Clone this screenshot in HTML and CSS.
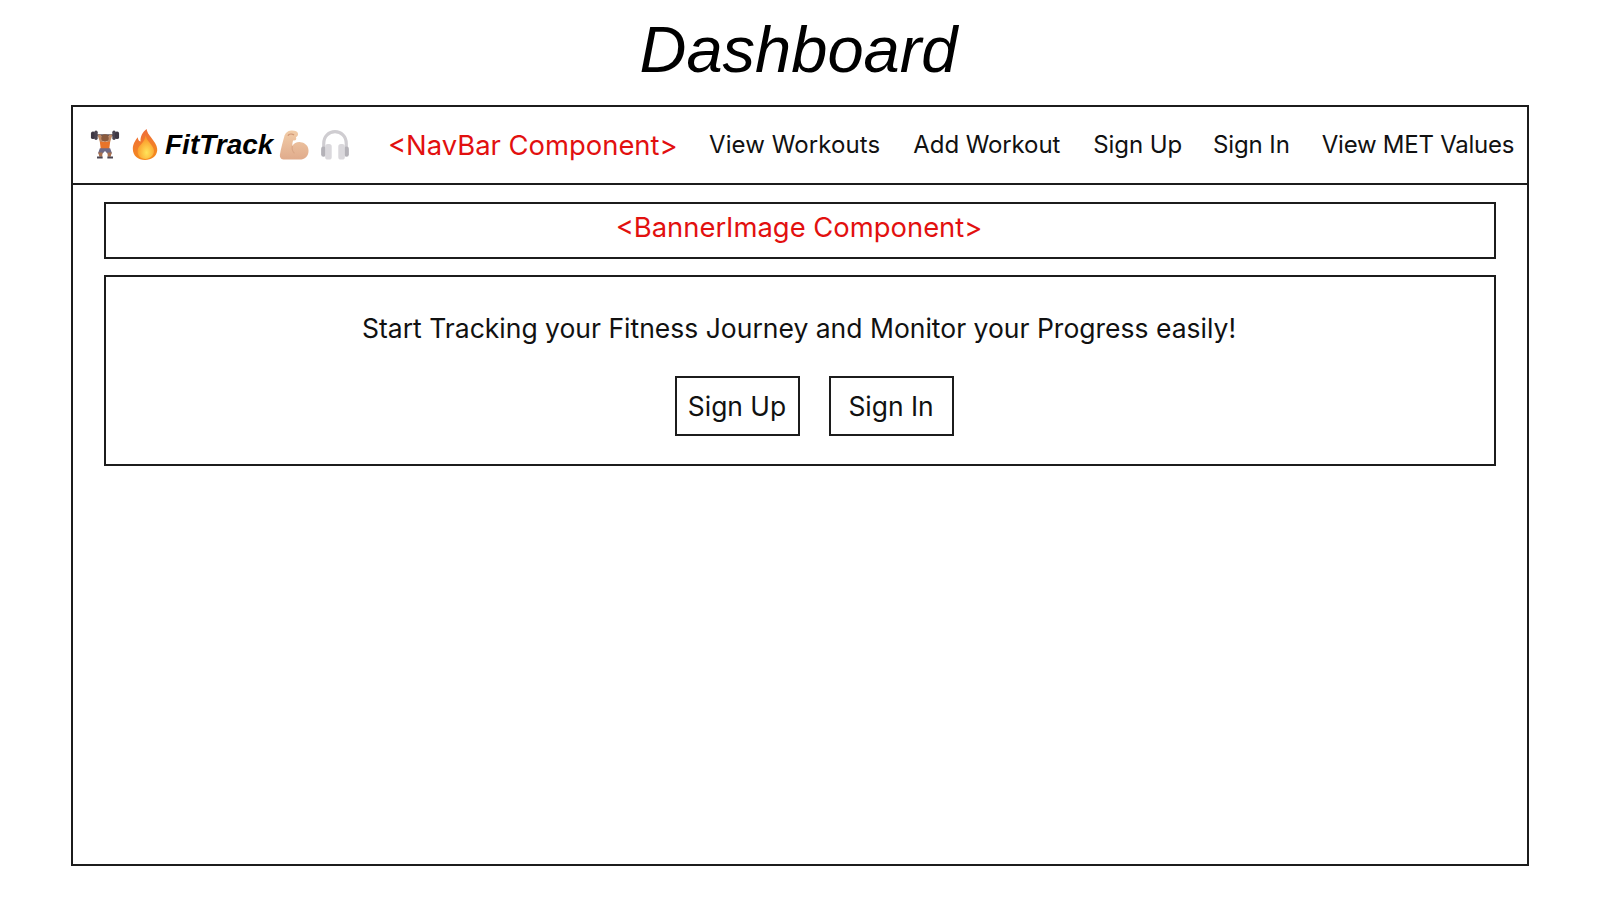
FILE: index.html
```html
<!DOCTYPE html>
<html lang="en">
<head>
<meta charset="utf-8">
<title>Dashboard</title>
<link rel="stylesheet" href="styles.css">
</head>
<body>
<h1 class="title">Dashboard</h1>
<main class="frame">
  <nav class="nav">
    <div class="brand">
      <svg class="icon lifter" viewBox="0 0 32 32" aria-hidden="true">
        <rect x="3" y="4.6" width="26" height="2" fill="#4a4450"/>
        <rect x="1" y="1.6" width="4.4" height="8" rx="2" fill="#3d3743"/>
        <rect x="4.6" y="0.6" width="3.6" height="10" rx="1.8" fill="#4a4450"/>
        <rect x="23.8" y="0.6" width="3.6" height="10" rx="1.8" fill="#4a4450"/>
        <rect x="26.6" y="1.6" width="4.4" height="8" rx="2" fill="#3d3743"/>
        <path d="M8 5 L11 14 L14 14 L12 5Z M24 5 L21 14 L18 14 L20 5Z" fill="#c08a66"/>
        <circle cx="16" cy="8.5" r="4" fill="#8a5a3e"/>
        <path d="M10.5 12.5 H21.5 L20.5 20.5 H11.5Z" fill="#e8742a"/>
        <path d="M10.5 19.5 H21.5 L23.5 25 H18.5 L16 22.5 L13.5 25 H8.5Z" fill="#6f6a85"/>
        <path d="M8.8 24 H13.4 L13 28.5 H10Z M18.6 24 H23.2 L22 28.5 H19Z" fill="#a8704f"/>
        <path d="M7.5 28.3 H13.5 V30.5 H7.5Z M18.5 28.3 H24.5 V30.5 H18.5Z" fill="#4a4450"/>
      </svg>
      <svg class="icon flame" viewBox="0 0 32 32" preserveAspectRatio="none" aria-hidden="true">
        <defs>
          <linearGradient id="flameOuter" x1="0" y1="0" x2="0.2" y2="1">
            <stop offset="0" stop-color="#ee6a3c"/>
            <stop offset="1" stop-color="#f48a1e"/>
          </linearGradient>
          <radialGradient id="flameInner" cx="0.55" cy="0.72" r="0.6">
            <stop offset="0" stop-color="#ffe45a"/>
            <stop offset="1" stop-color="#fb9a2a"/>
          </radialGradient>
        </defs>
        <path d="M18 0 C19 5 22 6.5 26 11.5 C30 16 31.5 19.5 31 22.5 C30 28.5 24 32 16 32 C7.5 32 1 28 1 20.5 C1 15.5 4 12 7 8.5 C7.5 11 8.5 12.5 10.5 13 C10 8 13 3 18 0Z" fill="url(#flameOuter)"/>
        <path d="M17 7 C18 13 26 16 27 22 C27.5 27.5 22 31 16.5 31 C10 31 6.5 27.5 7 22 C7.5 18 11 16.5 13 14 C15 12 16 9.5 17 7Z" fill="url(#flameInner)"/>
      </svg>
      <span class="brand-name">FitTrack</span>
      <svg class="icon muscle" viewBox="0 0 32 32" aria-hidden="true">
        <defs>
          <linearGradient id="skin" x1="0" y1="0" x2="0" y2="1">
            <stop offset="0" stop-color="#f2cda8"/>
            <stop offset="1" stop-color="#e0ab8c"/>
          </linearGradient>
        </defs>
        <path d="M6 31.5 C2.5 31.5 0.5 29.5 1 26 C2 20 4 13 5.5 7.5 C6.5 3.5 9 0.8 13 0.6 C17 0.4 20 1.6 20.3 4 C20.6 6.2 19 7.3 18 7.6 C19 9 18.3 11.2 16 11.3 L15 11.3 C14.4 13 14.2 15 14.2 17 C16 14 19 12.6 23 13 C28 13.5 31.5 17 31.5 22 C31.5 28 27.5 31.5 22 31.5Z" fill="url(#skin)"/>
        <path d="M9.5 6 C11 4 14 4 16 5.3" stroke="#cf9575" stroke-width="1.5" fill="none"/>
        <path d="M14.2 17 C13.6 20 14.4 23 16.5 25" stroke="#d9a585" stroke-width="1.2" fill="none"/>
      </svg>
      <svg class="icon phones" viewBox="0 0 32 32" aria-hidden="true">
        <path d="M4 22 V14.5 C4 6.5 9.5 1.8 16 1.8 C22.5 1.8 28 6.5 28 14.5 V22" fill="none" stroke="#cfcdd1" stroke-width="3.4"/>
        <rect x="1.2" y="17.5" width="5" height="11" rx="2.4" fill="#b4b2b8"/>
        <rect x="5.5" y="15" width="7" height="16.5" rx="2.8" fill="#dad8dc"/>
        <rect x="25.8" y="17.5" width="5" height="11" rx="2.4" fill="#b4b2b8"/>
        <rect x="19.5" y="15" width="7" height="16.5" rx="2.8" fill="#dad8dc"/>
      </svg>
    </div>
    <span class="label nav-label">&lt;NavBar Component&gt;</span>
    <a class="nav-link nav-link-wide">View Workouts</a>
    <a class="nav-link">Add Workout</a>
    <a class="nav-link nav-link-near">Sign Up</a>
    <a class="nav-link nav-link-close">Sign In</a>
    <a class="nav-link nav-link-tight">View MET Values</a>
  </nav>
  <div class="content">
    <div class="banner"><span class="label">&lt;BannerImage Component&gt;</span></div>
    <section class="hero">
      <p class="hero-text">Start Tracking your Fitness Journey and Monitor your Progress easily!</p>
      <div class="actions">
        <button class="btn">Sign Up</button>
        <button class="btn">Sign In</button>
      </div>
    </section>
  </div>
</main>
</body>
</html>
```
FILE: styles.css
```css
* { box-sizing: border-box; }
html, body { margin: 0; padding: 0; background: #fff; }
body {
  height: 899px;
  overflow: hidden;
  color: #111;
  font-family: Inter, "Noto Sans", sans-serif;
}
.title {
  margin: 0;
  height: 105px;
  padding-top: 11px;
  padding-right: 2px;
  text-align: center;
  font: italic 400 65px/78px "Liberation Sans", Arial, sans-serif;
  color: #000;
}
.frame {
  width: 1458px;
  height: 761px;
  margin-left: 71px;
  border: 2px solid #1c1c1c;
}
.nav {
  display: flex;
  align-items: center;
  height: 78px;
  padding: 0 12px 1px 17px;
  border-bottom: 2px solid #1c1c1c;
  font-size: 24px;
  letter-spacing: -0.1px;
}
.brand { display: flex; align-items: center; width: 298px; flex: none; letter-spacing: 0; }
.icon { flex: none; display: block; }
.lifter { width: 30px; height: 30px; margin-right: 12px; }
.flame { width: 26px; height: 31px; margin-right: 7px; }
.muscle { width: 30px; height: 30px; margin-left: 6px; margin-right: 11px; }
.phones { width: 30px; height: 30px; }
.brand-name {
  font: italic 700 28px/34px "Liberation Sans", Arial, sans-serif;
  color: #000;
}
.label { color: #e2100f; letter-spacing: 0; }
.nav-label { width: 321px; flex: none; font-size: 27.4px; }
.nav-link { margin-right: 33px; white-space: nowrap; }
.nav-link-wide { letter-spacing: 0.1px; }
.nav-link-near { margin-right: 31px; }
.nav-link-close { margin-right: 32px; }
.nav-link-tight { margin-right: 0; letter-spacing: -0.25px; }
.content { padding: 17px 31px; }
.banner {
  height: 57px;
  padding-right: 2px;
  border: 2px solid #1c1c1c;
  text-align: center;
  font-size: 27.4px;
  line-height: 46px;
}
.hero {
  height: 191px;
  margin-top: 16px;
  padding-top: 33px;
  border: 2px solid #1c1c1c;
  text-align: center;
}
.hero-text { margin: 0; padding-right: 2px; font-size: 26.5px; line-height: 36px; }
.actions { display: flex; justify-content: center; gap: 29px; margin-top: 30px; padding-left: 28px; }
.btn {
  width: 125px;
  height: 60px;
  padding: 0;
  background: #fff;
  border: 2px solid #1c1c1c;
  border-radius: 0;
  color: #111;
  font: 26.4px/1 Inter, "Noto Sans", sans-serif;
}
```
